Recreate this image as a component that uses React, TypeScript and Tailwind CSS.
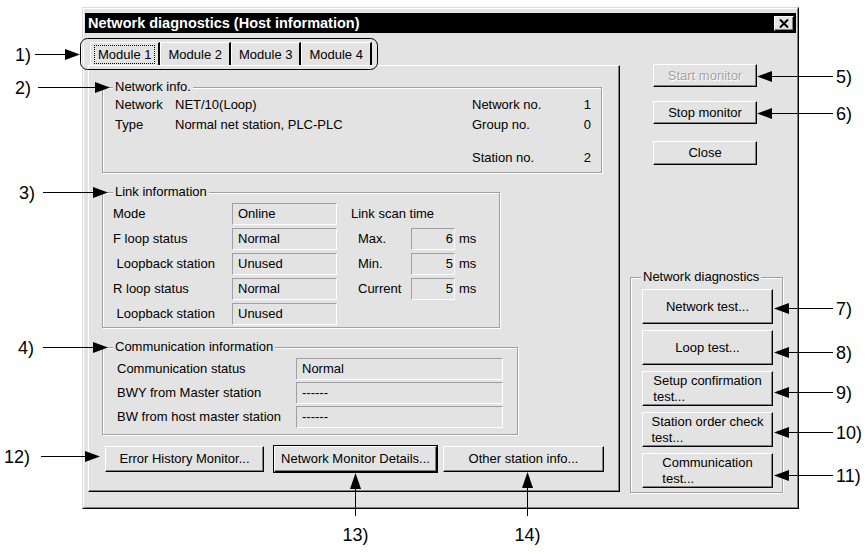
import React from "react";

const bevel =
  "border border-t-white border-l-white border-r-black border-b-black shadow-[inset_-1px_-1px_0_#808080]";
const sunken = "border border-t-[#a0a0a0] border-l-[#a0a0a0] border-r-white border-b-white";

type BtnProps = {
  className?: string;
  children: React.ReactNode;
  disabled?: boolean;
  isDefault?: boolean;
};

const Btn = ({ className = "", children, disabled, isDefault }: BtnProps) => (
  <div
    className={`flex items-center justify-center bg-[#e3e3e3] ${bevel} ${
      isDefault ? "outline outline-1 outline-black" : ""
    } ${disabled ? "text-[#a3a3a3] [text-shadow:1px_1px_0_#fff]" : ""} ${className}`}
  >
    {children}
  </div>
);

const Group = ({
  label,
  className = "",
  children,
}: {
  label: string;
  className?: string;
  children?: React.ReactNode;
}) => (
  <div
    className={`relative border border-[#a0a0a0] shadow-[inset_1px_1px_0_#fff,1px_1px_0_#fff] ${className}`}
  >
    <span className="absolute -top-[9px] left-[10px] bg-[#e3e3e3] px-[2px] leading-[16px]">
      {label}
    </span>
    {children}
  </div>
);

const Field = ({ className = "", children }: { className?: string; children?: React.ReactNode }) => (
  <div className={`flex h-[22px] items-center ${sunken} ${className}`}>{children}</div>
);

const tabs = ["Module 1", "Module 2", "Module 3", "Module 4"];

const linkRows = [
  ["Mode", "Online"],
  ["F loop status", "Normal"],
  [" Loopback station", "Unused"],
  ["R loop status", "Normal"],
  [" Loopback station", "Unused"],
];

const scanRows = [
  ["Max.", "6"],
  ["Min.", "5"],
  ["Current", "5"],
];

const commRows = [
  ["Communication status", "Normal"],
  ["BWY from Master station", "------"],
  ["BW from host master station", "------"],
];

const diagButtons = [
  ["Network test..."],
  ["Loop test..."],
  ["Setup confirmation", "test..."],
  ["Station order check", "test..."],
  ["Communication", "test..."],
];

const leftArrows = [
  { label: "1)", y: 54, tip: 80, x1: 35, tx: 15 },
  { label: "2)", y: 87, tip: 110, x1: 38, tx: 15 },
  { label: "3)", y: 192, tip: 108, x1: 43, tx: 19 },
  { label: "4)", y: 347, tip: 108, x1: 43, tx: 18 },
  { label: "12)", y: 456, tip: 100, x1: 41, tx: 4 },
];

const rightArrows = [
  { label: "5)", y: 76, tip: 757 },
  { label: "6)", y: 113, tip: 757 },
  { label: "7)", y: 308, tip: 774 },
  { label: "8)", y: 352, tip: 774 },
  { label: "9)", y: 392, tip: 774 },
  { label: "10)", y: 432, tip: 774 },
  { label: "11)", y: 475, tip: 774 },
];

const upArrows = [
  { label: "13)", x: 355, tip: 473 },
  { label: "14)", x: 527, tip: 472 },
];

const Callouts = () => (
  <svg
    className="pointer-events-none absolute inset-0"
    width={865}
    height={552}
    viewBox="0 0 865 552"
    fontFamily="'Liberation Sans', Arial, sans-serif"
    fontSize={18}
  >
    <rect x={80.5} y={38.5} width={297} height={31} rx={7} fill="none" stroke="#000" />
    {leftArrows.map((a) => (
      <g key={a.label}>
        <text x={a.tx} y={a.y + 1} dominantBaseline="central">
          {a.label}
        </text>
        <line x1={a.x1} y1={a.y + 0.5} x2={a.tip - 14} y2={a.y + 0.5} stroke="#000" />
        <polygon points={`${a.tip - 15},${a.y - 5} ${a.tip},${a.y + 0.5} ${a.tip - 15},${a.y + 6}`} />
      </g>
    ))}
    {rightArrows.map((a) => (
      <g key={a.label}>
        <polygon points={`${a.tip + 15},${a.y - 5} ${a.tip},${a.y + 0.5} ${a.tip + 15},${a.y + 6}`} />
        <line x1={a.tip + 14} y1={a.y + 0.5} x2={833} y2={a.y + 0.5} stroke="#000" />
        <text x={836} y={a.y + 1} dominantBaseline="central">
          {a.label}
        </text>
      </g>
    ))}
    {upArrows.map((a) => (
      <g key={a.label}>
        <polygon points={`${a.x - 5},${a.tip + 16} ${a.x + 0.5},${a.tip} ${a.x + 6},${a.tip + 16}`} />
        <line x1={a.x + 0.5} y1={a.tip + 15} x2={a.x + 0.5} y2={516} stroke="#000" />
        <text x={a.x + 0.5} y={535} textAnchor="middle" dominantBaseline="central">
          {a.label}
        </text>
      </g>
    ))}
  </svg>
);

export default function App() {
  return (
    <div className="relative h-[552px] w-[865px] overflow-hidden bg-white font-['Liberation_Sans',Arial,sans-serif] text-[13px] text-black">
      <div className="ml-[82px] mt-[7px] flex h-[502px] w-[717px] flex-col border border-t-[#dcdcdc] border-l-[#dcdcdc] border-r-black border-b-black">
        <div className="flex flex-1 flex-col border border-t-white border-l-white border-r-[#808080] border-b-[#808080] bg-[#e3e3e3] px-[1px] pt-[4px]">
          {/* title bar */}
          <div className="flex h-[20px] items-center justify-between bg-black pl-[3px] pr-[2px]">
            <span className="text-[14.5px] font-bold leading-none text-white">
              Network diagnostics (Host information)
            </span>
            <div className={`flex h-[15px] w-[20px] items-center justify-center bg-[#e3e3e3] ${bevel}`}>
              <svg width="10" height="9" viewBox="0 0 10 9">
                <path d="M1 0.5 L9 8.5 M9 0.5 L1 8.5" stroke="#000" strokeWidth="2" />
              </svg>
            </div>
          </div>

          {/* body */}
          <div className="flex pl-[3px] pt-[9px]">
            <div className="flex w-[532px] flex-col">
              <div className="flex h-[23px] pl-[2px]">
                {tabs.map((t, i) => (
                  <div
                    key={t}
                    className={`flex h-[23px] items-center border-l border-t border-r-2 border-t-white border-l-white border-r-black px-[3px] ${
                      i === 0 ? "" : ""
                    }`}
                  >
                    <span
                      className={`px-[3px] leading-[17px] ${
                        i === 0 ? "border border-dotted border-black" : "border border-transparent"
                      }`}
                    >
                      {t}
                    </span>
                  </div>
                ))}
              </div>
              <div className={`flex h-[427px] flex-col pl-[13px] ${bevel}`}>
                <Group label="Network info." className="mt-[21px] h-[86px] w-[500px]">
                  <div className="flex justify-between pl-[12px] pr-[10px] pt-[7px] leading-[20px]">
                    <div className="flex flex-col">
                      <div className="flex">
                        <span className="w-[60px]">Network</span>
                        <span>NET/10(Loop)</span>
                      </div>
                      <div className="flex">
                        <span className="w-[60px]">Type</span>
                        <span>Normal net station, PLC-PLC</span>
                      </div>
                    </div>
                    <div className="flex w-[119px] flex-col">
                      <div className="flex justify-between">
                        <span>Network no.</span>
                        <span>1</span>
                      </div>
                      <div className="flex justify-between">
                        <span>Group no.</span>
                        <span>0</span>
                      </div>
                      <div className="mt-[13px] flex justify-between">
                        <span>Station no.</span>
                        <span>2</span>
                      </div>
                    </div>
                  </div>
                </Group>

                <Group label="Link information" className="mt-[19px] h-[136px] w-[398px]">
                  <div className="flex pl-[10px] pt-[10px]">
                    <div className="grid grid-cols-[119px_105px] gap-y-[3px]">
                      {linkRows.map(([l, v], i) => (
                        <React.Fragment key={i}>
                          <span className="flex h-[22px] items-center whitespace-pre">{l}</span>
                          <Field className="pl-[5px]">{v}</Field>
                        </React.Fragment>
                      ))}
                    </div>
                    <div className="ml-[14px] flex flex-col gap-y-[3px]">
                      <span className="flex h-[22px] items-center">Link scan time</span>
                      {scanRows.map(([l, v]) => (
                        <div key={l} className="flex h-[22px] items-center">
                          <span className="w-[60px] pl-[7px]">{l}</span>
                          <Field className="w-[44px] justify-end pr-[1px]">{v}</Field>
                          <span className="ml-[4px]">ms</span>
                        </div>
                      ))}
                    </div>
                  </div>
                </Group>

                <Group label="Communication information" className="mt-[19px] h-[88px] w-[416px]">
                  <div className="grid grid-cols-[179px_207px] gap-y-[2px] pl-[14px] pt-[10px]">
                    {commRows.map(([l, v]) => (
                      <React.Fragment key={l}>
                        <span className="flex h-[22px] items-center">{l}</span>
                        <Field className="pl-[5px]">{v}</Field>
                      </React.Fragment>
                    ))}
                  </div>
                </Group>

                <div className="ml-[3px] mt-[11px] flex">
                  <Btn className="h-[26px] w-[159px]">Error History Monitor...</Btn>
                  <Btn isDefault className="ml-[10px] h-[26px] w-[163px]">
                    Network Monitor Details...
                  </Btn>
                  <Btn className="ml-[6px] h-[26px] w-[161px]">Other station info...</Btn>
                </div>
              </div>
            </div>

            <div className="ml-[10px] flex w-[153px] flex-col">
              <Btn disabled className="ml-[23px] mt-[22px] h-[23px] w-[104px]">
                Start monitor
              </Btn>
              <Btn className="ml-[23px] mt-[14px] h-[23px] w-[104px]">Stop monitor</Btn>
              <Btn className="ml-[23px] mt-[17px] h-[24px] w-[104px]">Close</Btn>
              <Group label="Network diagnostics" className="mt-[112px] h-[216px] w-[153px]">
                <div className="flex flex-col gap-[6px] pl-[11px] pt-[11px]">
                  {diagButtons.map((lines) => (
                    <Btn key={lines[0]} className="h-[35px] w-[131px]">
                      <span className="inline-block text-left leading-[16px]">
                        {lines.map((ln) => (
                          <span key={ln} className="block">
                            {ln}
                          </span>
                        ))}
                      </span>
                    </Btn>
                  ))}
                </div>
              </Group>
            </div>
          </div>
        </div>
      </div>
      <Callouts />
    </div>
  );
}
